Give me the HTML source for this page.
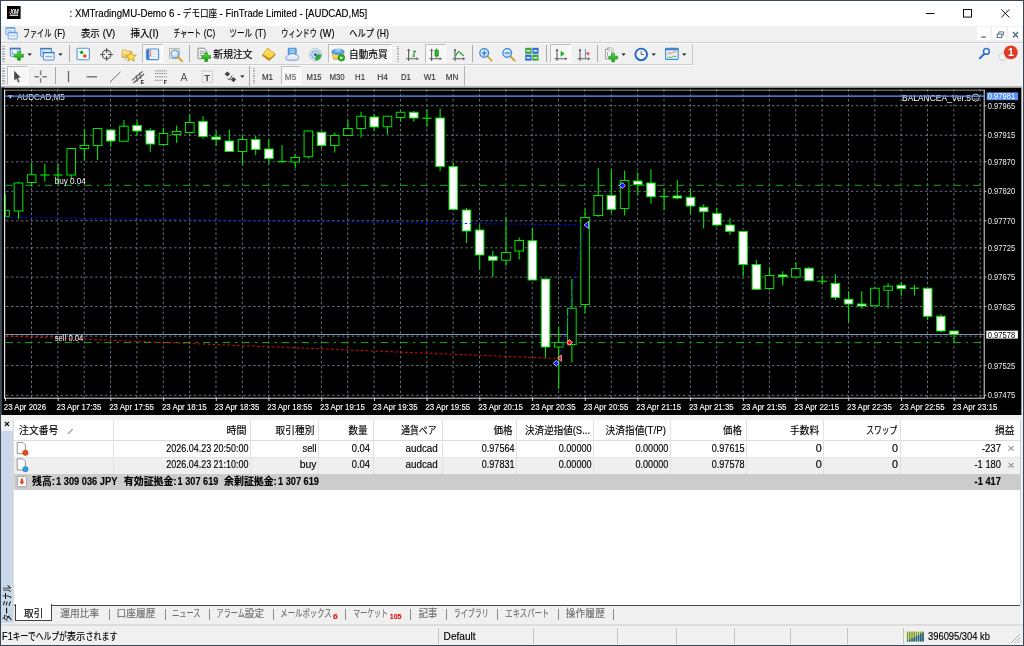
<!DOCTYPE html>
<html lang="ja"><head><meta charset="utf-8"><title>MT4</title>
<style>
*{box-sizing:border-box;margin:0;padding:0}
html,body{width:1024px;height:646px;overflow:hidden;background:#f0f0f0}
body{position:relative;font-family:"Liberation Sans","Noto Sans CJK JP",sans-serif;font-size:12px;color:#000}
.abs{position:absolute}
svg{will-change:transform}
#win{position:absolute;left:0;top:0;width:1024px;height:646px;border:1px solid #3a4755;border-right-width:1.5px;border-bottom-width:1.5px;pointer-events:none;z-index:50}
#title{left:1px;top:1px;width:1022px;height:24.5px;background:#fff}
#title .t{position:absolute;left:68.5px;top:4.5px;font-size:12.3px;line-height:16px;white-space:nowrap;color:#000;letter-spacing:-0.12px}
#menu{left:1px;top:25.5px;width:1022px;height:17px;background:#f0f0f0}
.mi{position:absolute;top:0;height:17px;line-height:17px;font-size:12px;white-space:nowrap;color:#000}
.mi i{font-style:normal;font-family:"Liberation Sans",sans-serif}
.hl{position:absolute;left:1px;width:1022px;height:1px}
.sep{position:absolute;width:1px;background:#a8a8a8}
.grip{position:absolute;width:2.6px;background-image:repeating-linear-gradient(to bottom,#b4b4b4 0,#b4b4b4 1.1px,transparent 1.1px,transparent 2.5px)}
.btnon{position:absolute;background:#f7f7f7;border:1px solid #fdfdfd;border-top-color:#bdbdbd;border-left-color:#bdbdbd}
.tf{position:absolute;top:70px;font-size:9.6px;line-height:12px;color:#444;white-space:nowrap;letter-spacing:-0.2px}
.jp{font-family:"Noto Sans CJK JP","Liberation Sans",sans-serif}
.tbtxt{position:absolute;top:46.5px;font-size:12.2px;line-height:14px;white-space:nowrap;color:#000;font-weight:500;letter-spacing:0.6px}
/* terminal */
#term{left:13.5px;top:420px;width:1006.5px;height:185px;background:#fff}
.th{position:absolute;top:0;height:20px;line-height:20px;font-size:11.6px;color:#000;white-space:nowrap}
.row{position:absolute;left:0;width:1007.5px;height:16.5px}
.c{position:absolute;top:0;height:16.5px;line-height:16.5px;font-size:11px;white-space:nowrap;text-align:right;color:#000;letter-spacing:-0.1px}
.vl{position:absolute;top:0;width:1px;background:#e2e2e2}
.tab{position:absolute;top:607px;height:14px;line-height:14px;font-size:11.4px;color:#666;white-space:nowrap}
.tsep{position:absolute;top:608.5px;width:1px;height:11.5px;background:#8c8c8c}
.ssep{position:absolute;top:628.2px;width:1px;height:15.6px;background:#c4c4c4}
</style></head><body>
<!-- title bar -->
<div id="title" class="abs">
 <svg class="abs" style="left:6.3px;top:4.7px" width="13.6" height="13.4" viewBox="0 0 13.6 13.4"><rect width="13.6" height="13.4" fill="#000"/><path d="M1.6 6.4L2.5 3.8L3.3 6.4L2.5 7.6Z" fill="#d01818"/><text x="2.9" y="7.9" font-family="Liberation Sans,sans-serif" font-size="6.6" font-weight="bold" font-style="italic" fill="#fff" textLength="8.8" lengthAdjust="spacingAndGlyphs">XM</text><rect x="2.6" y="8.6" width="8.6" height="1.3" fill="#e4e4e4"/></svg>
 <svg class="abs" style="left:920px;top:4px" width="95" height="18" viewBox="920 4 95 18"><path d="M924.8 12.5H933.6" stroke="#111" stroke-width="1"/><rect x="962.5" y="8.5" width="8" height="7.6" fill="none" stroke="#111" stroke-width="1"/><path d="M1000.3 8.4L1008.3 16.4M1008.3 8.4L1000.3 16.4" stroke="#111" stroke-width="1"/></svg>
</div>
<!-- menu bar -->
<div id="menu" class="abs">
 <svg class="abs" style="left:3.5px;top:1.5px" width="14" height="14" viewBox="0 0 14 14"><rect x="0.9" y="0.5" width="9" height="6.8" rx="0.5" fill="#eef5fd" stroke="#5e9ae6" stroke-width="0.9"/><path d="M0.9 1.1H9.9" stroke="#5e9ae6" stroke-width="1.2"/><path d="M2.2 4.4L3.4 3.2L4.6 4.4L5.8 3.2L7 4.4" fill="none" stroke="#5e9ae6" stroke-width="0.7"/><rect x="3.2" y="5.2" width="9" height="6.7" rx="0.5" fill="#f6faff" stroke="#5e9ae6" stroke-width="0.9"/><path d="M3.2 5.8H12.2" stroke="#5e9ae6" stroke-width="1.2"/><path d="M4.6 9.6L5.8 8.2L7 9.6L8.2 8.2L9.4 9.6L10.6 8.2" fill="none" stroke="#5e9ae6" stroke-width="0.7"/></svg>
 <div class="abs" style="left:975.8px;top:1.3px;width:13.4px;height:13.6px;background:#fff"></div>
 <div class="abs" style="left:991.4px;top:1.3px;width:13.6px;height:13.6px;background:#fff"></div>
 <div class="abs" style="left:1007.2px;top:1.3px;width:13.4px;height:13.6px;background:#fff"></div>
 <svg class="abs" style="left:975px;top:0" width="47" height="17" viewBox="975 25.5 47 17"><path d="M980.2 36.6H985" stroke="#5a6e8c" stroke-width="1.3"/><path d="M997.8 33.4V31.4H1002.6V34.6H1001" fill="none" stroke="#5a6e8c" stroke-width="1"/><rect x="996.2" y="33.6" width="4.6" height="3.4" fill="none" stroke="#5a6e8c" stroke-width="1"/><path d="M1012 31.6L1017 37M1017 31.6L1012 37" stroke="#5a6e8c" stroke-width="1.5"/></svg>
</div>
<div class="hl" style="top:42.3px;background:#cfcfcf"></div>
<div class="hl" style="top:43.2px;background:#fafafa"></div>
<!-- toolbar backgrounds / active buttons -->
<div class="btnon" style="left:141.8px;top:43.6px;width:21.6px;height:19.6px"></div>
<div class="btnon" style="left:328.2px;top:43.8px;width:64.2px;height:19.6px"></div>
<div class="btnon" style="left:425px;top:43.8px;width:20.6px;height:19.6px"></div>
<div class="btnon" style="left:550px;top:43.8px;width:20.6px;height:19.6px"></div>
<div class="btnon" style="left:7.2px;top:66.2px;width:20.8px;height:19px"></div>
<div class="btnon" style="left:280.6px;top:66.2px;width:20.8px;height:19px"></div>
<div class="grip" style="left:2.2px;top:46.4px;height:15.4px"></div>
<div class="grip" style="left:396.6px;top:46.4px;height:15.4px"></div>
<div class="grip" style="left:2.2px;top:68.2px;height:16px"></div>
<div class="grip" style="left:252.6px;top:68.2px;height:16px"></div>
<div class="sep" style="left:69.3px;top:45.4px;height:17px"></div>
<div class="sep" style="left:188.9px;top:45.4px;height:17px"></div>
<div class="sep" style="left:471.8px;top:45.4px;height:17px"></div>
<div class="sep" style="left:546px;top:45.4px;height:17px"></div>
<div class="sep" style="left:596.8px;top:45.4px;height:17px"></div>
<div class="sep" style="left:54.5px;top:67.4px;height:17px"></div>
<div class="sep" style="left:249.2px;top:66px;height:20px"></div>
<div class="sep" style="left:464.4px;top:65.6px;height:20.6px;background:#b4b4b4"></div>
<!-- toolbar 1 end borders -->
<div class="abs" style="left:692px;top:44px;width:1px;height:20.6px;background:#c8c8c8"></div>
<div class="abs" style="left:1px;top:64px;width:692px;height:1px;background:#cdcdcd"></div>
<div class="abs" style="left:1px;top:65px;width:692px;height:1px;background:#fbfbfb"></div>
<svg class="abs" style="left:0;top:43px" width="1024" height="44" viewBox="0 43 1024 44">
<defs>
 <linearGradient id="gpl" x1="0" y1="0" x2="0" y2="1"><stop offset="0" stop-color="#5ee04a"/><stop offset="1" stop-color="#109a10"/></linearGradient>
 <linearGradient id="gbl" x1="0" y1="0" x2="0" y2="1"><stop offset="0" stop-color="#fbfdff"/><stop offset="1" stop-color="#d4e2f2"/></linearGradient>
 <linearGradient id="gyl" x1="0" y1="0" x2="0" y2="1"><stop offset="0" stop-color="#fff0a4"/><stop offset="1" stop-color="#f0c444"/></linearGradient>
 <radialGradient id="gmag" cx="0.4" cy="0.35" r="0.7"><stop offset="0" stop-color="#f2f9ff"/><stop offset="1" stop-color="#a8d0f4"/></radialGradient>
</defs>
<g id="dd" fill="#111">
 <path d="M27.6 53.4H31.8L29.7 55.8Z"/><path d="M58.4 53.4H62.6L60.5 55.8Z"/>
 <path d="M621.5 53.4H625.7L623.6 55.8Z"/><path d="M651.6 53.4H655.8L653.7 55.8Z"/><path d="M682.1 53.4H686.3L684.2 55.8Z"/>
 <path d="M240.2 75.4H244.4L242.3 77.8Z"/>
</g>
<!-- 1 new chart -->
<rect x="10.3" y="48.3" width="9.8" height="7.9" rx="0.3" fill="#f4f8fd" stroke="#4d8ad0" stroke-width="1"/>
<rect x="9.8" y="47.8" width="10.8" height="1.7" fill="#3f7cc6"/>
<path d="M12.4 50.6V54.8M11.6 53.8H14.4" fill="none" stroke="#5a8cc8" stroke-width="0.7"/>
<path d="M17.4 51.2H20.4V54.2H23.4V57.2H20.4V60.2H17.4V57.2H14.4V54.2H17.4Z" fill="url(#gpl)" stroke="#0c8a0c" stroke-width="0.6"/>
<!-- 2 profiles -->
<rect x="40.7" y="48.4" width="10.6" height="7.8" rx="0.3" fill="#eaf2fb" stroke="#4d8ad0" stroke-width="1"/>
<rect x="40.2" y="47.9" width="11.6" height="1.6" fill="#3f7cc6"/>
<path d="M42.8 50.4V54.6M42 53.4H49.6" stroke="#6a9ad6" stroke-width="0.7" fill="none"/>
<rect x="43.5" y="52.4" width="10.6" height="7.6" rx="0.3" fill="#f4f8fd" stroke="#4d8ad0" stroke-width="1"/>
<rect x="43" y="51.9" width="11.6" height="1.5" fill="#3f7cc6"/>
<path d="M45.4 56.6H52.4" stroke="#8fb2e0" stroke-width="1.6"/>
<!-- 3 market watch -->
<rect x="77" y="48.2" width="12.4" height="11.6" rx="1.2" fill="#f6fafe" stroke="#4f9ade" stroke-width="1.1"/>
<path d="M79.4 52.4L81.6 50.2L83.8 52.4L81.6 54.6Z" fill="#22a022"/><path d="M82.6 56L84.8 53.8L87 56L84.8 58.2Z" fill="#e4551c"/>
<!-- 4 crosshair -->
<circle cx="106.6" cy="54.5" r="4.3" fill="none" stroke="#5a5a5a" stroke-width="1.2"/>
<path d="M106.6 48.2V53M106.6 56V60.8M100 54.5H105.2M108 54.5H113.2" stroke="#5a5a5a" stroke-width="1.2"/>
<!-- 5 navigator folder+star -->
<path d="M122.2 50H126.2L127.2 51.2H131.4V57.6H122.2Z" fill="url(#gyl)" stroke="#c89a2c" stroke-width="0.7"/>
<path d="M131 51.6L132.5 55L136.2 55.3L133.4 57.7L134.3 61.2L131 59.3L127.7 61.2L128.6 57.7L125.8 55.3L129.5 55Z" fill="#ffe050" stroke="#c4961c" stroke-width="0.8"/>
<path d="M125.4 57V60.6" stroke="#777" stroke-width="0.7" stroke-dasharray="1 1"/>
<!-- 6 terminal -->
<rect x="146.4" y="49" width="12.2" height="10.6" rx="1.2" fill="#f8fbff" stroke="#4a8ad2" stroke-width="1.1"/>
<rect x="147" y="49.6" width="2.4" height="9.4" fill="#3c7ccc"/>
<path d="M151.2 52H157.6M151.2 54.4H157.6M151.2 56.8H157.6" stroke="#b8cfe8" stroke-width="0.7"/>
<circle cx="150.6" cy="51" r="0.7" fill="#e03020"/><circle cx="150.6" cy="53.4" r="0.7" fill="#e03020"/><circle cx="150.6" cy="55.8" r="0.7" fill="#e03020"/>
<!-- 7 strategy tester -->
<rect x="169.6" y="48.4" width="9.6" height="10" fill="#f4f0e4" stroke="#b0a68a" stroke-width="0.8"/>
<circle cx="175" cy="54" r="3.9" fill="url(#gmag)" stroke="#5a9ad8" stroke-width="1.1"/>
<path d="M177.8 57L182.4 61.4" stroke="#d8a428" stroke-width="1.8" stroke-linecap="round"/>
<!-- 8 new order -->
<path d="M198 48.2H204.2L206.4 50.4V58.6H198Z" fill="#fbfbfb" stroke="#787878" stroke-width="0.9"/>
<path d="M199.6 51.2H204.8M199.6 53.2H204.8M199.6 55.2H202" stroke="#8a8a8a" stroke-width="0.9"/>
<path d="M204.8 52.8H207.6V55.6H210.6V58.4H207.6V61.4H204.8V58.4H201.8V55.6H204.8Z" fill="url(#gpl)" stroke="#0c8a0c" stroke-width="0.6"/>
<!-- 9 gold book -->
<path d="M262.4 55.6L267.7 48.4L275.5 54.6L269.2 60.6Z" fill="#b8841a" stroke="#a87410" stroke-width="0.6"/>
<path d="M263 54.4L267.8 48.5L275 54.2L269.6 58.6Z" fill="#ffd640" stroke="#e0a820" stroke-width="0.5"/>
<path d="M265.4 53.6L268 50.4L272.2 53.8" fill="none" stroke="#ffef9a" stroke-width="0.9"/>
<!-- 10 cloud -->
<rect x="288.2" y="48.2" width="8" height="6.8" rx="0.8" fill="#4fa0ec" stroke="#2e7fd0" stroke-width="0.7"/>
<text x="289.6" y="53.4" font-family="Liberation Sans,sans-serif" font-size="4.6" font-weight="bold" fill="#e8f4ff">10</text>
<path d="M288 60.2Q285.8 60.2 285.8 58Q285.8 56 288 55.8Q288.6 53.6 291.2 54Q293 52.6 295 54.4Q298.8 54.2 298.6 57.6Q298.6 60.2 296 60.2Z" fill="url(#gbl)" stroke="#6c8cc4" stroke-width="0.8"/>
<!-- 11 signals -->
<circle cx="315.4" cy="54.6" r="6.2" fill="#d9e6f3" stroke="#a9bfd8" stroke-width="0.8"/>
<circle cx="315.4" cy="54.6" r="3.8" fill="none" stroke="#6fa0d8" stroke-width="1"/>
<path d="M315.4 54.6L321.6 54.6A6.2 6.2 0 0 1 315.4 60.8Z" fill="#36a836"/>
<circle cx="315.4" cy="54.6" r="1.5" fill="#2a6cc0"/>
<!-- autotrading icon -->
<path d="M332 53.2Q332 49.6 337.6 49.4Q343.6 49.4 344 53.2L343 59.4H333.6Z" fill="url(#gyl)" stroke="#c49a30" stroke-width="0.6"/>
<ellipse cx="338" cy="51.8" rx="6.2" ry="2.6" fill="#5aa6e6" stroke="#2e78c8" stroke-width="0.7"/>
<ellipse cx="338" cy="50.4" rx="3" ry="1.4" fill="#9fd0f6"/>
<circle cx="341.4" cy="57.8" r="3.3" fill="#22b022" stroke="#0a800a" stroke-width="0.6"/>
<path d="M340.4 56.2L343.2 57.8L340.4 59.4Z" fill="#fff"/>
<!-- 12 bar chart -->
<path d="M408.6 49.4V61M406.2 58.8H417.6" stroke="#5c5c5c" stroke-width="1.1" fill="none"/><path d="M407.1 51L408.6 48.4L410.1 51Z M416.6 57.3L419.0 58.8L416.6 60.3Z" fill="#5c5c5c"/>
<path d="M414 50.6V57M414 51.4H416M412.2 56H414" stroke="#1c9a1c" stroke-width="1.1" fill="none"/>
<!-- 13 candles (active) -->
<path d="M431.6 49.4V61M429.2 58.8H440.6" stroke="#5c5c5c" stroke-width="1.1" fill="none"/><path d="M430.1 51L431.6 48.4L433.1 51Z M439.6 57.3L442.0 58.8L439.6 60.3Z" fill="#5c5c5c"/>
<path d="M436.6 48.4V57.8" stroke="#1c8a1c" stroke-width="0.9"/><rect x="435" y="50.2" width="3.2" height="5.8" fill="#28c028" stroke="#0e7a0e" stroke-width="0.7"/>
<!-- 14 line chart -->
<path d="M455 49.4V61M452.6 58.8H464.0" stroke="#5c5c5c" stroke-width="1.1" fill="none"/><path d="M453.5 51L455 48.4L456.5 51Z M463.0 57.3L465.4 58.8L463.0 60.3Z" fill="#5c5c5c"/>
<path d="M455.4 56.4Q458.4 49.6 460.2 52.6T464 55.4" stroke="#1c9a1c" stroke-width="1.1" fill="none"/>
<!-- zoom in / out -->
<path d="M487.6 56.4L491.6 60.6" stroke="#d8a428" stroke-width="2" stroke-linecap="round"/>
<circle cx="484.2" cy="53" r="4.4" fill="url(#gmag)" stroke="#3a86d8" stroke-width="1.2"/>
<path d="M481.8 53H486.6M484.2 50.6V55.4" stroke="#2a6cc0" stroke-width="1.2"/>
<path d="M510.6 56.4L514.6 60.6" stroke="#d8a428" stroke-width="2" stroke-linecap="round"/>
<circle cx="507.2" cy="53" r="4.4" fill="url(#gmag)" stroke="#3a86d8" stroke-width="1.2"/>
<path d="M504.8 53H509.6" stroke="#2a6cc0" stroke-width="1.2"/>
<!-- tile -->
<rect x="525.2" y="47.8" width="6.4" height="6" fill="#3aa63a"/><rect x="532.4" y="47.8" width="6.2" height="6" fill="#2e6fd0"/>
<rect x="525.2" y="54.6" width="6.4" height="6" fill="#2e6fd0"/><rect x="532.4" y="54.6" width="6.2" height="6" fill="#3aa63a"/>
<path d="M526.4 50.8H530.4M533.6 50.8H537.4M526.4 57.8H530.4M533.6 57.8H537.4" stroke="#e8f0f8" stroke-width="1.4"/>
<!-- autoscroll (active) -->
<path d="M557 49.4V61M554.6 58.8H566.0" stroke="#5c5c5c" stroke-width="1.1" fill="none"/><path d="M555.5 51L557 48.4L558.5 51Z M565.0 57.3L567.4 58.8L565.0 60.3Z" fill="#5c5c5c"/>
<path d="M560.6 50.8L564.6 53.8L560.6 56.8Z" fill="#22a822"/>
<!-- chart shift -->
<path d="M580 49.4V61M577.6 58.8H589.0" stroke="#5c5c5c" stroke-width="1.1" fill="none"/><path d="M578.5 51L580 48.4L581.5 51Z M588.0 57.3L590.4 58.8L588.0 60.3Z" fill="#5c5c5c"/>
<path d="M585.4 49V58" stroke="#4a8ad2" stroke-width="0.9"/><path d="M589.6 53.6H587M588.8 51.8L586.4 53.6L588.8 55.4" stroke="#d84a1c" stroke-width="1" fill="none"/>
<!-- indicators -->
<path d="M607.4 47.8H611.4L613.2 49.6V57H607.4Z" fill="#f4f4f4" stroke="#999" stroke-width="0.7"/>
<path d="M605.4 49.4H609.6L611.4 51.2V58.8H605.4Z" fill="#fbfbfb" stroke="#888" stroke-width="0.8"/>
<text x="606.8" y="55.6" font-family="Liberation Serif,serif" font-style="italic" font-size="5.6" fill="#555">f</text>
<path d="M611.8 53.4H614.6V56.2H617.6V59H614.6V61.8H611.8V59H608.8V56.2H611.8Z" fill="url(#gpl)" stroke="#0c8a0c" stroke-width="0.6"/>
<!-- clock -->
<circle cx="641.2" cy="54.4" r="5.8" fill="#f4f8fc" stroke="#1e66c8" stroke-width="1.9"/>
<path d="M641.2 51V54.6H644" stroke="#555" stroke-width="0.9" fill="none"/>
<!-- template -->
<rect x="665.6" y="48.4" width="12.6" height="11" rx="0.8" fill="#fafcff" stroke="#3f86d6" stroke-width="1.1"/>
<rect x="665.6" y="48.4" width="12.6" height="2" fill="#3f86d6"/>
<path d="M667.4 53.6L669.6 52.4L671.6 53.2L674 51.8L676.6 52.2" stroke="#d05a2a" stroke-width="0.9" fill="none"/>
<path d="M667.4 57.8L669.6 56.8L671.6 57.6L674 56L676.6 57" stroke="#2e9e2e" stroke-width="0.9" fill="none"/>
<path d="M666 54.8H678" stroke="#9cc0e8" stroke-width="0.6"/>
<!-- search + chat -->
<circle cx="986.4" cy="51.4" r="2.9" fill="#f4f8ff" stroke="#2e6fd0" stroke-width="1.5"/>
<path d="M984.2 54L979.8 58.2" stroke="#2e6fd0" stroke-width="2" stroke-linecap="round"/>
<ellipse cx="1003.4" cy="56.6" rx="4.4" ry="3.4" fill="#f6f6f6" stroke="#c0c0c0" stroke-width="0.7"/><path d="M1001.6 59.4L1000.6 62L1004 59.8Z" fill="#d8d8d8"/>
<circle cx="1010.8" cy="52.4" r="6.9" fill="#e23a22"/>
<text x="1010.9" y="56.2" text-anchor="middle" font-family="Liberation Sans,sans-serif" font-weight="bold" font-size="10.6" fill="#fff">1</text>
<!-- toolbar 2 icons -->
<path d="M14.2 70.8V80.6L16.4 78.6L18.2 82.4L19.6 81.8L17.8 78L20.6 77.6Z" fill="#484848"/>
<path d="M40.6 70.6V75.2M40.6 78.2V82.8M34.4 76.7H39M42.2 76.7H46.8" stroke="#7c7c7c" stroke-width="1.4"/>
<path d="M68.5 71V82.2" stroke="#666" stroke-width="1.3"/>
<path d="M86.6 76.8H97" stroke="#666" stroke-width="1.3"/>
<path d="M110 82.2L120.4 72" stroke="#6a6a6a" stroke-width="1"/>
<path d="M132 80.4L142.6 71.4M133.4 83L144 74M136 75.4L137.6 81.6M139.4 72.6L141 78.8" stroke="#555" stroke-width="1.05"/>
<text x="140.4" y="83.8" font-family="Liberation Sans,sans-serif" font-weight="bold" font-size="5.4" fill="#222">E</text>
<path d="M155 70.9H166.8M155 73.5H166.8M155 76.8H166.8M155 80.3H162.6" stroke="#6a6a6a" stroke-width="0.9" stroke-dasharray="1.3 0.9"/>
<text x="163.8" y="83.8" font-family="Liberation Sans,sans-serif" font-weight="bold" font-size="5.4" fill="#222">F</text>
<text x="180.6" y="80.6" font-family="Liberation Sans,sans-serif" font-size="10.4" fill="#555">A</text>
<rect x="202.2" y="71" width="10.2" height="11.2" fill="none" stroke="#9a9a9a" stroke-width="0.8" stroke-dasharray="1 1"/>
<text x="204.2" y="80.6" font-family="Liberation Sans,sans-serif" font-size="9.6" font-weight="bold" fill="#4a4a4a">T</text>
<path d="M224.6 74L227.4 71.4L230.2 74L227.4 76.6Z" fill="#444"/><path d="M230.6 79.6L233.4 77L236.2 79.6L233.4 82.2Z" fill="#444"/>
<path d="M227.6 78.4L229.2 80L232.2 75.4" stroke="#444" stroke-width="0.9" fill="none"/>
</svg>

<svg class="chart" width="1024" height="330" viewBox="0 86 1024 330" style="position:absolute;left:0;top:86px">
<rect x="1" y="87.6" width="1020.6" height="327.8" fill="#000"/>
<rect x="1" y="86.4" width="1021" height="1.3" fill="#9c9c9c"/>
<rect x="0.8" y="87.6" width="1.4" height="327.8" fill="#3a4450"/>
<rect x="1021.6" y="87.6" width="1.2" height="327.8" fill="#e8e8e8"/>
<line x1="31.50" y1="89.22" x2="31.50" y2="397.8" stroke="#7d8ea0" stroke-width="0.8" stroke-dasharray="2.47 2.47"/>
<line x1="57.85" y1="89.22" x2="57.85" y2="397.8" stroke="#7d8ea0" stroke-width="0.8" stroke-dasharray="2.47 2.47"/>
<line x1="84.21" y1="89.22" x2="84.21" y2="397.8" stroke="#7d8ea0" stroke-width="0.8" stroke-dasharray="2.47 2.47"/>
<line x1="110.56" y1="89.22" x2="110.56" y2="397.8" stroke="#7d8ea0" stroke-width="0.8" stroke-dasharray="2.47 2.47"/>
<line x1="136.91" y1="89.22" x2="136.91" y2="397.8" stroke="#7d8ea0" stroke-width="0.8" stroke-dasharray="2.47 2.47"/>
<line x1="163.27" y1="89.22" x2="163.27" y2="397.8" stroke="#7d8ea0" stroke-width="0.8" stroke-dasharray="2.47 2.47"/>
<line x1="189.62" y1="89.22" x2="189.62" y2="397.8" stroke="#7d8ea0" stroke-width="0.8" stroke-dasharray="2.47 2.47"/>
<line x1="215.97" y1="89.22" x2="215.97" y2="397.8" stroke="#7d8ea0" stroke-width="0.8" stroke-dasharray="2.47 2.47"/>
<line x1="242.32" y1="89.22" x2="242.32" y2="397.8" stroke="#7d8ea0" stroke-width="0.8" stroke-dasharray="2.47 2.47"/>
<line x1="268.68" y1="89.22" x2="268.68" y2="397.8" stroke="#7d8ea0" stroke-width="0.8" stroke-dasharray="2.47 2.47"/>
<line x1="295.03" y1="89.22" x2="295.03" y2="397.8" stroke="#7d8ea0" stroke-width="0.8" stroke-dasharray="2.47 2.47"/>
<line x1="321.38" y1="89.22" x2="321.38" y2="397.8" stroke="#7d8ea0" stroke-width="0.8" stroke-dasharray="2.47 2.47"/>
<line x1="347.74" y1="89.22" x2="347.74" y2="397.8" stroke="#7d8ea0" stroke-width="0.8" stroke-dasharray="2.47 2.47"/>
<line x1="374.09" y1="89.22" x2="374.09" y2="397.8" stroke="#7d8ea0" stroke-width="0.8" stroke-dasharray="2.47 2.47"/>
<line x1="400.44" y1="89.22" x2="400.44" y2="397.8" stroke="#7d8ea0" stroke-width="0.8" stroke-dasharray="2.47 2.47"/>
<line x1="426.80" y1="89.22" x2="426.80" y2="397.8" stroke="#7d8ea0" stroke-width="0.8" stroke-dasharray="2.47 2.47"/>
<line x1="453.15" y1="89.22" x2="453.15" y2="397.8" stroke="#7d8ea0" stroke-width="0.8" stroke-dasharray="2.47 2.47"/>
<line x1="479.50" y1="89.22" x2="479.50" y2="397.8" stroke="#7d8ea0" stroke-width="0.8" stroke-dasharray="2.47 2.47"/>
<line x1="505.85" y1="89.22" x2="505.85" y2="397.8" stroke="#7d8ea0" stroke-width="0.8" stroke-dasharray="2.47 2.47"/>
<line x1="532.21" y1="89.22" x2="532.21" y2="397.8" stroke="#7d8ea0" stroke-width="0.8" stroke-dasharray="2.47 2.47"/>
<line x1="558.56" y1="89.22" x2="558.56" y2="397.8" stroke="#7d8ea0" stroke-width="0.8" stroke-dasharray="2.47 2.47"/>
<line x1="584.91" y1="89.22" x2="584.91" y2="397.8" stroke="#7d8ea0" stroke-width="0.8" stroke-dasharray="2.47 2.47"/>
<line x1="611.27" y1="89.22" x2="611.27" y2="397.8" stroke="#7d8ea0" stroke-width="0.8" stroke-dasharray="2.47 2.47"/>
<line x1="637.62" y1="89.22" x2="637.62" y2="397.8" stroke="#7d8ea0" stroke-width="0.8" stroke-dasharray="2.47 2.47"/>
<line x1="663.97" y1="89.22" x2="663.97" y2="397.8" stroke="#7d8ea0" stroke-width="0.8" stroke-dasharray="2.47 2.47"/>
<line x1="690.33" y1="89.22" x2="690.33" y2="397.8" stroke="#7d8ea0" stroke-width="0.8" stroke-dasharray="2.47 2.47"/>
<line x1="716.68" y1="89.22" x2="716.68" y2="397.8" stroke="#7d8ea0" stroke-width="0.8" stroke-dasharray="2.47 2.47"/>
<line x1="743.03" y1="89.22" x2="743.03" y2="397.8" stroke="#7d8ea0" stroke-width="0.8" stroke-dasharray="2.47 2.47"/>
<line x1="769.38" y1="89.22" x2="769.38" y2="397.8" stroke="#7d8ea0" stroke-width="0.8" stroke-dasharray="2.47 2.47"/>
<line x1="795.74" y1="89.22" x2="795.74" y2="397.8" stroke="#7d8ea0" stroke-width="0.8" stroke-dasharray="2.47 2.47"/>
<line x1="822.09" y1="89.22" x2="822.09" y2="397.8" stroke="#7d8ea0" stroke-width="0.8" stroke-dasharray="2.47 2.47"/>
<line x1="848.44" y1="89.22" x2="848.44" y2="397.8" stroke="#7d8ea0" stroke-width="0.8" stroke-dasharray="2.47 2.47"/>
<line x1="874.80" y1="89.22" x2="874.80" y2="397.8" stroke="#7d8ea0" stroke-width="0.8" stroke-dasharray="2.47 2.47"/>
<line x1="901.15" y1="89.22" x2="901.15" y2="397.8" stroke="#7d8ea0" stroke-width="0.8" stroke-dasharray="2.47 2.47"/>
<line x1="927.50" y1="89.22" x2="927.50" y2="397.8" stroke="#7d8ea0" stroke-width="0.8" stroke-dasharray="2.47 2.47"/>
<line x1="953.86" y1="89.22" x2="953.86" y2="397.8" stroke="#7d8ea0" stroke-width="0.8" stroke-dasharray="2.47 2.47"/>
<line x1="980.21" y1="89.22" x2="980.21" y2="397.8" stroke="#7d8ea0" stroke-width="0.8" stroke-dasharray="2.47 2.47"/>
<line x1="6.1" y1="105.7" x2="984" y2="105.7" stroke="#7d8ea0" stroke-width="0.8" stroke-dasharray="2.47 2.47"/>
<line x1="6.1" y1="135.2" x2="984" y2="135.2" stroke="#7d8ea0" stroke-width="0.8" stroke-dasharray="2.47 2.47"/>
<line x1="6.1" y1="161.8" x2="984" y2="161.8" stroke="#7d8ea0" stroke-width="0.8" stroke-dasharray="2.47 2.47"/>
<line x1="6.1" y1="191.3" x2="984" y2="191.3" stroke="#7d8ea0" stroke-width="0.8" stroke-dasharray="2.47 2.47"/>
<line x1="6.1" y1="220.8" x2="984" y2="220.8" stroke="#7d8ea0" stroke-width="0.8" stroke-dasharray="2.47 2.47"/>
<line x1="6.1" y1="247.8" x2="984" y2="247.8" stroke="#7d8ea0" stroke-width="0.8" stroke-dasharray="2.47 2.47"/>
<line x1="6.1" y1="277.1" x2="984" y2="277.1" stroke="#7d8ea0" stroke-width="0.8" stroke-dasharray="2.47 2.47"/>
<line x1="6.1" y1="306.5" x2="984" y2="306.5" stroke="#7d8ea0" stroke-width="0.8" stroke-dasharray="2.47 2.47"/>
<line x1="6.1" y1="336.15" x2="984" y2="336.15" stroke="#7d8ea0" stroke-width="0.8" stroke-dasharray="2.47 2.47"/>
<line x1="6.1" y1="365.6" x2="984" y2="365.6" stroke="#7d8ea0" stroke-width="0.8" stroke-dasharray="2.47 2.47"/>
<line x1="6.1" y1="395.3" x2="984" y2="395.3" stroke="#7d8ea0" stroke-width="0.8" stroke-dasharray="2.47 2.47"/>
<rect x="2.2" y="87.6" width="2.4" height="327.8" fill="#000"/>
<rect x="4.1" y="89.7" width="980.6" height="0.9" fill="#a4a4a4"/>
<rect x="4.1" y="89.7" width="1.1" height="309" fill="#f4f4f4"/>
<rect x="983.7" y="89.7" width="1" height="309" fill="#dcdcdc"/>
<rect x="4.1" y="397.7" width="980.6" height="1" fill="#dcdcdc"/>
<line x1="5.4" y1="334.5" x2="984" y2="334.5" stroke="#8696aa" stroke-width="1"/>
<line x1="5.4" y1="185.3" x2="981" y2="185.3" stroke="#18ac18" stroke-width="1" stroke-dasharray="7.4 4.94 2.47 4.94"/>
<line x1="5.4" y1="342.6" x2="981" y2="342.6" stroke="#18ac18" stroke-width="1" stroke-dasharray="7.4 4.94 2.47 4.94"/>
<path d="M5.5 194.2V216.7M5.5 210.5H9.4V216.7H5.5" stroke="#00e400" stroke-width="0.95" fill="none"/>
<line x1="18.50" y1="181.75" x2="18.50" y2="219.25" stroke="#00e400" stroke-width="1.1"/>
<rect x="14.20" y="183" width="8.60" height="28.00" fill="#000" stroke="#00e400" stroke-width="1"/>
<line x1="31.68" y1="162.5" x2="31.68" y2="186.75" stroke="#00e400" stroke-width="1.1"/>
<rect x="27.38" y="174.75" width="8.60" height="7.75" fill="#000" stroke="#00e400" stroke-width="1"/>
<line x1="44.85" y1="163.75" x2="44.85" y2="181.75" stroke="#00e400" stroke-width="1.1"/>
<line x1="40.25" y1="175" x2="49.45" y2="175" stroke="#00e400" stroke-width="1.2"/>
<line x1="58.03" y1="163.75" x2="58.03" y2="184.25" stroke="#00e400" stroke-width="1.1"/>
<line x1="53.43" y1="175" x2="62.63" y2="175" stroke="#00e400" stroke-width="1.2"/>
<line x1="71.20" y1="148" x2="71.20" y2="179.25" stroke="#00e400" stroke-width="1.1"/>
<rect x="66.90" y="148.5" width="8.60" height="26.50" fill="#000" stroke="#00e400" stroke-width="1"/>
<line x1="84.38" y1="129.25" x2="84.38" y2="160.5" stroke="#00e400" stroke-width="1.1"/>
<rect x="80.08" y="145.5" width="8.60" height="3.00" fill="#000" stroke="#00e400" stroke-width="1"/>
<line x1="97.56" y1="128" x2="97.56" y2="160" stroke="#00e400" stroke-width="1.1"/>
<rect x="93.26" y="128.5" width="8.60" height="17.00" fill="#000" stroke="#00e400" stroke-width="1"/>
<line x1="110.73" y1="129.25" x2="110.73" y2="146.75" stroke="#00e400" stroke-width="1.1"/>
<rect x="106.43" y="130" width="8.60" height="11.00" fill="#fff" stroke="#00e400" stroke-width="1"/>
<line x1="123.91" y1="120" x2="123.91" y2="141.75" stroke="#00e400" stroke-width="1.1"/>
<rect x="119.61" y="126.25" width="8.60" height="15.00" fill="#000" stroke="#00e400" stroke-width="1"/>
<line x1="137.08" y1="120.5" x2="137.08" y2="135.5" stroke="#00e400" stroke-width="1.1"/>
<rect x="132.78" y="125.5" width="8.60" height="5.50" fill="#fff" stroke="#00e400" stroke-width="1"/>
<line x1="150.26" y1="128" x2="150.26" y2="152.25" stroke="#00e400" stroke-width="1.1"/>
<rect x="145.96" y="130.5" width="8.60" height="13.50" fill="#fff" stroke="#00e400" stroke-width="1"/>
<line x1="163.44" y1="128" x2="163.44" y2="146" stroke="#00e400" stroke-width="1.1"/>
<rect x="159.14" y="133.5" width="8.60" height="11.00" fill="#000" stroke="#00e400" stroke-width="1"/>
<line x1="176.61" y1="125.5" x2="176.61" y2="143" stroke="#00e400" stroke-width="1.1"/>
<rect x="172.31" y="131.5" width="8.60" height="3.00" fill="#000" stroke="#00e400" stroke-width="1"/>
<line x1="189.79" y1="114.25" x2="189.79" y2="133.5" stroke="#00e400" stroke-width="1.1"/>
<rect x="185.49" y="122.5" width="8.60" height="10.00" fill="#000" stroke="#00e400" stroke-width="1"/>
<line x1="202.96" y1="116.25" x2="202.96" y2="138.75" stroke="#00e400" stroke-width="1.1"/>
<rect x="198.66" y="121.5" width="8.60" height="15.00" fill="#fff" stroke="#00e400" stroke-width="1"/>
<line x1="216.14" y1="130.5" x2="216.14" y2="146" stroke="#00e400" stroke-width="1.1"/>
<rect x="211.84" y="137" width="8.60" height="2.50" fill="#fff" stroke="#00e400" stroke-width="1"/>
<line x1="229.32" y1="129.25" x2="229.32" y2="151.75" stroke="#00e400" stroke-width="1.1"/>
<rect x="225.02" y="141" width="8.60" height="10.50" fill="#fff" stroke="#00e400" stroke-width="1"/>
<line x1="242.49" y1="135.5" x2="242.49" y2="165.5" stroke="#00e400" stroke-width="1.1"/>
<rect x="238.19" y="139.5" width="8.60" height="12.00" fill="#000" stroke="#00e400" stroke-width="1"/>
<line x1="255.67" y1="136" x2="255.67" y2="155" stroke="#00e400" stroke-width="1.1"/>
<rect x="251.37" y="139.5" width="8.60" height="10.00" fill="#fff" stroke="#00e400" stroke-width="1"/>
<line x1="268.84" y1="139.25" x2="268.84" y2="164.25" stroke="#00e400" stroke-width="1.1"/>
<rect x="264.54" y="149" width="8.60" height="9.50" fill="#fff" stroke="#00e400" stroke-width="1"/>
<line x1="282.02" y1="145" x2="282.02" y2="163" stroke="#00e400" stroke-width="1.1"/>
<line x1="277.42" y1="161.5" x2="286.62" y2="161.5" stroke="#00e400" stroke-width="1.2"/>
<line x1="295.20" y1="154.25" x2="295.20" y2="168" stroke="#00e400" stroke-width="1.1"/>
<rect x="290.90" y="157.5" width="8.60" height="4.50" fill="#000" stroke="#00e400" stroke-width="1"/>
<line x1="308.37" y1="130.5" x2="308.37" y2="158.5" stroke="#00e400" stroke-width="1.1"/>
<rect x="304.07" y="131" width="8.60" height="25.75" fill="#000" stroke="#00e400" stroke-width="1"/>
<line x1="321.55" y1="131.75" x2="321.55" y2="148" stroke="#00e400" stroke-width="1.1"/>
<rect x="317.25" y="132.25" width="8.60" height="13.25" fill="#fff" stroke="#00e400" stroke-width="1"/>
<line x1="334.72" y1="132.5" x2="334.72" y2="152.5" stroke="#00e400" stroke-width="1.1"/>
<rect x="330.42" y="135.5" width="8.60" height="10.00" fill="#000" stroke="#00e400" stroke-width="1"/>
<line x1="347.90" y1="120" x2="347.90" y2="136" stroke="#00e400" stroke-width="1.1"/>
<rect x="343.60" y="128.5" width="8.60" height="7.00" fill="#000" stroke="#00e400" stroke-width="1"/>
<line x1="361.08" y1="111.75" x2="361.08" y2="137.5" stroke="#00e400" stroke-width="1.1"/>
<rect x="356.78" y="116.25" width="8.60" height="12.25" fill="#000" stroke="#00e400" stroke-width="1"/>
<line x1="374.25" y1="114.25" x2="374.25" y2="131" stroke="#00e400" stroke-width="1.1"/>
<rect x="369.95" y="117" width="8.60" height="10.00" fill="#fff" stroke="#00e400" stroke-width="1"/>
<line x1="387.43" y1="116" x2="387.43" y2="134.25" stroke="#00e400" stroke-width="1.1"/>
<rect x="383.13" y="116.25" width="8.60" height="10.50" fill="#000" stroke="#00e400" stroke-width="1"/>
<line x1="400.60" y1="111" x2="400.60" y2="121.75" stroke="#00e400" stroke-width="1.1"/>
<rect x="396.30" y="112.25" width="8.60" height="5.25" fill="#000" stroke="#00e400" stroke-width="1"/>
<line x1="413.78" y1="111" x2="413.78" y2="121.75" stroke="#00e400" stroke-width="1.1"/>
<rect x="409.48" y="112.25" width="8.60" height="5.75" fill="#fff" stroke="#00e400" stroke-width="1"/>
<line x1="426.96" y1="109.25" x2="426.96" y2="126.75" stroke="#00e400" stroke-width="1.1"/>
<line x1="422.36" y1="118.25" x2="431.56" y2="118.25" stroke="#00e400" stroke-width="1.2"/>
<line x1="440.13" y1="108.5" x2="440.13" y2="171.25" stroke="#00e400" stroke-width="1.1"/>
<rect x="435.83" y="118" width="8.60" height="48.50" fill="#fff" stroke="#00e400" stroke-width="1"/>
<line x1="453.31" y1="162.5" x2="453.31" y2="210.5" stroke="#00e400" stroke-width="1.1"/>
<rect x="449.01" y="166.5" width="8.60" height="43.00" fill="#fff" stroke="#00e400" stroke-width="1"/>
<line x1="466.48" y1="208" x2="466.48" y2="243" stroke="#00e400" stroke-width="1.1"/>
<rect x="462.18" y="210" width="8.60" height="21.00" fill="#fff" stroke="#00e400" stroke-width="1"/>
<line x1="479.66" y1="225" x2="479.66" y2="270" stroke="#00e400" stroke-width="1.1"/>
<rect x="475.36" y="230" width="8.60" height="25.00" fill="#fff" stroke="#00e400" stroke-width="1"/>
<line x1="492.84" y1="250.75" x2="492.84" y2="277" stroke="#00e400" stroke-width="1.1"/>
<rect x="488.54" y="256.25" width="8.60" height="4.00" fill="#fff" stroke="#00e400" stroke-width="1"/>
<line x1="506.01" y1="216.75" x2="506.01" y2="265.75" stroke="#00e400" stroke-width="1.1"/>
<rect x="501.71" y="252.5" width="8.60" height="7.75" fill="#000" stroke="#00e400" stroke-width="1"/>
<line x1="519.19" y1="237.5" x2="519.19" y2="259.5" stroke="#00e400" stroke-width="1.1"/>
<rect x="514.89" y="240.5" width="8.60" height="10.50" fill="#000" stroke="#00e400" stroke-width="1"/>
<line x1="532.36" y1="228" x2="532.36" y2="280" stroke="#00e400" stroke-width="1.1"/>
<rect x="528.06" y="240.75" width="8.60" height="39.25" fill="#fff" stroke="#00e400" stroke-width="1"/>
<line x1="545.54" y1="279" x2="545.54" y2="358.25" stroke="#00e400" stroke-width="1.1"/>
<rect x="541.24" y="279" width="8.60" height="68.00" fill="#fff" stroke="#00e400" stroke-width="1"/>
<line x1="558.72" y1="327" x2="558.72" y2="389" stroke="#00e400" stroke-width="1.1"/>
<rect x="554.42" y="342.5" width="8.60" height="4.50" fill="#000" stroke="#00e400" stroke-width="1"/>
<line x1="571.89" y1="279" x2="571.89" y2="362.5" stroke="#00e400" stroke-width="1.1"/>
<rect x="567.59" y="308.25" width="8.60" height="36.25" fill="#000" stroke="#00e400" stroke-width="1"/>
<line x1="585.07" y1="208.5" x2="585.07" y2="313.25" stroke="#00e400" stroke-width="1.1"/>
<rect x="580.77" y="217.5" width="8.60" height="87.00" fill="#000" stroke="#00e400" stroke-width="1"/>
<line x1="598.24" y1="168" x2="598.24" y2="216.75" stroke="#00e400" stroke-width="1.1"/>
<rect x="593.94" y="195.5" width="8.60" height="20.00" fill="#000" stroke="#00e400" stroke-width="1"/>
<line x1="611.42" y1="169.25" x2="611.42" y2="213" stroke="#00e400" stroke-width="1.1"/>
<rect x="607.12" y="195.5" width="8.60" height="14.00" fill="#fff" stroke="#00e400" stroke-width="1"/>
<line x1="624.60" y1="170.5" x2="624.60" y2="215.5" stroke="#00e400" stroke-width="1.1"/>
<rect x="620.30" y="180.5" width="8.60" height="28.00" fill="#000" stroke="#00e400" stroke-width="1"/>
<line x1="637.77" y1="172.25" x2="637.77" y2="195.5" stroke="#00e400" stroke-width="1.1"/>
<rect x="633.47" y="181" width="8.60" height="3.50" fill="#fff" stroke="#00e400" stroke-width="1"/>
<line x1="650.95" y1="169.25" x2="650.95" y2="203.75" stroke="#00e400" stroke-width="1.1"/>
<rect x="646.65" y="183" width="8.60" height="13.75" fill="#fff" stroke="#00e400" stroke-width="1"/>
<line x1="664.12" y1="188.5" x2="664.12" y2="210" stroke="#00e400" stroke-width="1.1"/>
<line x1="659.52" y1="196.5" x2="668.72" y2="196.5" stroke="#00e400" stroke-width="1.2"/>
<line x1="677.30" y1="180" x2="677.30" y2="199.25" stroke="#00e400" stroke-width="1.1"/>
<rect x="673.00" y="196" width="8.60" height="2.00" fill="#fff" stroke="#00e400" stroke-width="1"/>
<line x1="690.48" y1="188" x2="690.48" y2="214.25" stroke="#00e400" stroke-width="1.1"/>
<rect x="686.18" y="197.25" width="8.60" height="8.75" fill="#fff" stroke="#00e400" stroke-width="1"/>
<line x1="703.65" y1="204.25" x2="703.65" y2="228.5" stroke="#00e400" stroke-width="1.1"/>
<rect x="699.35" y="207.25" width="8.60" height="4.50" fill="#fff" stroke="#00e400" stroke-width="1"/>
<line x1="716.83" y1="208" x2="716.83" y2="226.75" stroke="#00e400" stroke-width="1.1"/>
<rect x="712.53" y="213.5" width="8.60" height="11.50" fill="#fff" stroke="#00e400" stroke-width="1"/>
<line x1="730.00" y1="218" x2="730.00" y2="235" stroke="#00e400" stroke-width="1.1"/>
<rect x="725.70" y="225" width="8.60" height="6.50" fill="#fff" stroke="#00e400" stroke-width="1"/>
<line x1="743.18" y1="231.25" x2="743.18" y2="276.25" stroke="#00e400" stroke-width="1.1"/>
<rect x="738.88" y="231.5" width="8.60" height="33.00" fill="#fff" stroke="#00e400" stroke-width="1"/>
<line x1="756.36" y1="260" x2="756.36" y2="290" stroke="#00e400" stroke-width="1.1"/>
<rect x="752.06" y="264.5" width="8.60" height="24.75" fill="#fff" stroke="#00e400" stroke-width="1"/>
<line x1="769.53" y1="267.5" x2="769.53" y2="290" stroke="#00e400" stroke-width="1.1"/>
<rect x="765.23" y="275.5" width="8.60" height="13.00" fill="#000" stroke="#00e400" stroke-width="1"/>
<line x1="782.71" y1="271.25" x2="782.71" y2="285.5" stroke="#00e400" stroke-width="1.1"/>
<rect x="778.41" y="275" width="8.60" height="1.75" fill="#fff" stroke="#00e400" stroke-width="1"/>
<line x1="795.88" y1="262.5" x2="795.88" y2="277.5" stroke="#00e400" stroke-width="1.1"/>
<rect x="791.58" y="268.5" width="8.60" height="8.50" fill="#000" stroke="#00e400" stroke-width="1"/>
<line x1="809.06" y1="266.75" x2="809.06" y2="281.25" stroke="#00e400" stroke-width="1.1"/>
<rect x="804.76" y="268.25" width="8.60" height="12.50" fill="#fff" stroke="#00e400" stroke-width="1"/>
<line x1="822.24" y1="275.5" x2="822.24" y2="284.5" stroke="#00e400" stroke-width="1.1"/>
<line x1="817.64" y1="281.25" x2="826.84" y2="281.25" stroke="#00e400" stroke-width="1.2"/>
<line x1="835.41" y1="274" x2="835.41" y2="300" stroke="#00e400" stroke-width="1.1"/>
<rect x="831.11" y="283.5" width="8.60" height="14.00" fill="#fff" stroke="#00e400" stroke-width="1"/>
<line x1="848.59" y1="291.25" x2="848.59" y2="322" stroke="#00e400" stroke-width="1.1"/>
<rect x="844.29" y="299.25" width="8.60" height="4.75" fill="#fff" stroke="#00e400" stroke-width="1"/>
<line x1="861.76" y1="291.25" x2="861.76" y2="308.75" stroke="#00e400" stroke-width="1.1"/>
<rect x="857.46" y="304" width="8.60" height="2.00" fill="#fff" stroke="#00e400" stroke-width="1"/>
<line x1="874.94" y1="287.5" x2="874.94" y2="306.25" stroke="#00e400" stroke-width="1.1"/>
<rect x="870.64" y="288.25" width="8.60" height="17.50" fill="#000" stroke="#00e400" stroke-width="1"/>
<line x1="888.12" y1="283.25" x2="888.12" y2="308.25" stroke="#00e400" stroke-width="1.1"/>
<rect x="883.82" y="286.25" width="8.60" height="4.00" fill="#000" stroke="#00e400" stroke-width="1"/>
<line x1="901.29" y1="282" x2="901.29" y2="295.75" stroke="#00e400" stroke-width="1.1"/>
<rect x="896.99" y="285.25" width="8.60" height="3.25" fill="#fff" stroke="#00e400" stroke-width="1"/>
<line x1="914.47" y1="285" x2="914.47" y2="295.5" stroke="#00e400" stroke-width="1.1"/>
<line x1="909.87" y1="288.25" x2="919.07" y2="288.25" stroke="#00e400" stroke-width="1.2"/>
<line x1="927.64" y1="288.25" x2="927.64" y2="320" stroke="#00e400" stroke-width="1.1"/>
<rect x="923.34" y="288.25" width="8.60" height="28.00" fill="#fff" stroke="#00e400" stroke-width="1"/>
<line x1="940.82" y1="314.25" x2="940.82" y2="332.5" stroke="#00e400" stroke-width="1.1"/>
<rect x="936.52" y="316.25" width="8.60" height="14.75" fill="#fff" stroke="#00e400" stroke-width="1"/>
<line x1="954.00" y1="331" x2="954.00" y2="343" stroke="#00e400" stroke-width="1.1"/>
<rect x="949.70" y="331" width="8.60" height="3.25" fill="#fff" stroke="#00e400" stroke-width="1"/>
<line x1="5.4" y1="217.4" x2="583" y2="225" stroke="#0c0cee" stroke-width="1" stroke-dasharray="2.47 2.47"/>
<line x1="584" y1="228" x2="560.5" y2="356" stroke="#0c0cee" stroke-width="0.9" stroke-dasharray="2.47 2.47"/>
<line x1="5.4" y1="336" x2="555" y2="358.4" stroke="#ec0808" stroke-width="1" stroke-dasharray="2.47 2.47"/>
<path d="M584 225L588.6 221.4V228.6Z" fill="#1010ff" stroke="#f0f0ff" stroke-width="0.7"/>
<path d="M619.3 185.5L622.3 182.5L625.3 185.5L622.3 188.5Z" fill="#1010ff" stroke="#f0f0ff" stroke-width="0.8"/>
<path d="M557.4 358.2L561.4 355V361.4Z" fill="#ff2020" stroke="#ffe0e0" stroke-width="0.6"/>
<path d="M553.3 363.3L556.2 360.4L559.1 363.3L556.2 366.2Z" fill="#1010ff" stroke="#f0f0ff" stroke-width="0.8"/>
<path d="M566.6 342.5L569.5 339.6L572.4 342.5L569.5 345.4Z" fill="#ff1010" stroke="#fff0f0" stroke-width="0.8"/>
<path d="M7.8 95.3H12.8L10.3 98.6Z" fill="#fff"/>
<text x="16.9" y="100" font-family="Liberation Sans, Arial, sans-serif" font-size="8.5" fill="#e4e4e4" textLength="48" lengthAdjust="spacingAndGlyphs">AUDCAD,M5</text>
<text x="971" y="100.8" font-family="Liberation Sans, Arial, sans-serif" font-size="8.4" fill="#fff" text-anchor="end" textLength="69" lengthAdjust="spacingAndGlyphs">BALANCEA_Ver.5</text>
<circle cx="975.6" cy="97.6" r="3.6" fill="none" stroke="#fff" stroke-width="0.8"/>
<path d="M973.8 98.4Q975.6 100.3 977.4 98.4" fill="none" stroke="#fff" stroke-width="0.7"/><circle cx="974.3" cy="96.6" r="0.5" fill="#fff"/><circle cx="976.9" cy="96.6" r="0.5" fill="#fff"/>
<text x="54.7" y="183.7" font-family="Liberation Sans, Arial, sans-serif" font-size="8.3" fill="#f4f4f4" textLength="31.2" lengthAdjust="spacingAndGlyphs">buy 0.04</text>
<text x="54.7" y="340.8" font-family="Liberation Sans, Arial, sans-serif" font-size="8.3" fill="#f4f4f4" textLength="28.7" lengthAdjust="spacingAndGlyphs">sell 0.04</text>
<rect x="5.4" y="95.45" width="978.6" height="1.35" fill="#5a90f2"/>
<line x1="984.4" y1="105.7" x2="986.4" y2="105.7" stroke="#dcdcdc" stroke-width="0.9"/>
<text x="987.8" y="108.7" font-family="Liberation Sans, Arial, sans-serif" font-size="8.7" fill="#f0f0f0" textLength="27.4" lengthAdjust="spacingAndGlyphs">0.97965</text>
<line x1="984.4" y1="135.2" x2="986.4" y2="135.2" stroke="#dcdcdc" stroke-width="0.9"/>
<text x="987.8" y="138.2" font-family="Liberation Sans, Arial, sans-serif" font-size="8.7" fill="#f0f0f0" textLength="27.4" lengthAdjust="spacingAndGlyphs">0.97915</text>
<line x1="984.4" y1="161.8" x2="986.4" y2="161.8" stroke="#dcdcdc" stroke-width="0.9"/>
<text x="987.8" y="164.8" font-family="Liberation Sans, Arial, sans-serif" font-size="8.7" fill="#f0f0f0" textLength="27.4" lengthAdjust="spacingAndGlyphs">0.97870</text>
<line x1="984.4" y1="191.3" x2="986.4" y2="191.3" stroke="#dcdcdc" stroke-width="0.9"/>
<text x="987.8" y="194.3" font-family="Liberation Sans, Arial, sans-serif" font-size="8.7" fill="#f0f0f0" textLength="27.4" lengthAdjust="spacingAndGlyphs">0.97820</text>
<line x1="984.4" y1="220.8" x2="986.4" y2="220.8" stroke="#dcdcdc" stroke-width="0.9"/>
<text x="987.8" y="223.8" font-family="Liberation Sans, Arial, sans-serif" font-size="8.7" fill="#f0f0f0" textLength="27.4" lengthAdjust="spacingAndGlyphs">0.97770</text>
<line x1="984.4" y1="247.8" x2="986.4" y2="247.8" stroke="#dcdcdc" stroke-width="0.9"/>
<text x="987.8" y="250.8" font-family="Liberation Sans, Arial, sans-serif" font-size="8.7" fill="#f0f0f0" textLength="27.4" lengthAdjust="spacingAndGlyphs">0.97725</text>
<line x1="984.4" y1="277.1" x2="986.4" y2="277.1" stroke="#dcdcdc" stroke-width="0.9"/>
<text x="987.8" y="280.1" font-family="Liberation Sans, Arial, sans-serif" font-size="8.7" fill="#f0f0f0" textLength="27.4" lengthAdjust="spacingAndGlyphs">0.97675</text>
<line x1="984.4" y1="306.5" x2="986.4" y2="306.5" stroke="#dcdcdc" stroke-width="0.9"/>
<text x="987.8" y="309.5" font-family="Liberation Sans, Arial, sans-serif" font-size="8.7" fill="#f0f0f0" textLength="27.4" lengthAdjust="spacingAndGlyphs">0.97625</text>
<line x1="984.4" y1="365.6" x2="986.4" y2="365.6" stroke="#dcdcdc" stroke-width="0.9"/>
<text x="987.8" y="368.6" font-family="Liberation Sans, Arial, sans-serif" font-size="8.7" fill="#f0f0f0" textLength="27.4" lengthAdjust="spacingAndGlyphs">0.97525</text>
<line x1="984.4" y1="395.3" x2="986.4" y2="395.3" stroke="#dcdcdc" stroke-width="0.9"/>
<text x="987.8" y="398.3" font-family="Liberation Sans, Arial, sans-serif" font-size="8.7" fill="#f0f0f0" textLength="27.4" lengthAdjust="spacingAndGlyphs">0.97475</text>
<rect x="986.6" y="92.4" width="31.5" height="7.8" fill="#5a90f2"/>
<text x="987.8" y="99.3" font-family="Liberation Sans, Arial, sans-serif" font-size="8.7" fill="#fff" textLength="27.4" lengthAdjust="spacingAndGlyphs">0.97981</text>
<rect x="986.3" y="330.7" width="31.6" height="7.9" fill="#fff"/>
<text x="987.8" y="337.6" font-family="Liberation Sans, Arial, sans-serif" font-size="8.7" fill="#000" textLength="27.4" lengthAdjust="spacingAndGlyphs">0.97578</text>
<line x1="5.50" y1="398" x2="5.50" y2="401" stroke="#e6e6e6" stroke-width="0.9"/>
<text x="3.80" y="409.7" font-family="Liberation Sans, Arial, sans-serif" font-size="8.7" fill="#fff" stroke="#fff" stroke-width="0.12" textLength="42.3" lengthAdjust="spacingAndGlyphs">23 Apr 2026</text>
<line x1="58.20" y1="398" x2="58.20" y2="401" stroke="#e6e6e6" stroke-width="0.9"/>
<text x="56.50" y="409.7" font-family="Liberation Sans, Arial, sans-serif" font-size="8.7" fill="#fff" stroke="#fff" stroke-width="0.12" textLength="44.8" lengthAdjust="spacingAndGlyphs">23 Apr 17:35</text>
<line x1="110.91" y1="398" x2="110.91" y2="401" stroke="#e6e6e6" stroke-width="0.9"/>
<text x="109.21" y="409.7" font-family="Liberation Sans, Arial, sans-serif" font-size="8.7" fill="#fff" stroke="#fff" stroke-width="0.12" textLength="44.8" lengthAdjust="spacingAndGlyphs">23 Apr 17:55</text>
<line x1="163.62" y1="398" x2="163.62" y2="401" stroke="#e6e6e6" stroke-width="0.9"/>
<text x="161.92" y="409.7" font-family="Liberation Sans, Arial, sans-serif" font-size="8.7" fill="#fff" stroke="#fff" stroke-width="0.12" textLength="44.8" lengthAdjust="spacingAndGlyphs">23 Apr 18:15</text>
<line x1="216.32" y1="398" x2="216.32" y2="401" stroke="#e6e6e6" stroke-width="0.9"/>
<text x="214.62" y="409.7" font-family="Liberation Sans, Arial, sans-serif" font-size="8.7" fill="#fff" stroke="#fff" stroke-width="0.12" textLength="44.8" lengthAdjust="spacingAndGlyphs">23 Apr 18:35</text>
<line x1="269.02" y1="398" x2="269.02" y2="401" stroke="#e6e6e6" stroke-width="0.9"/>
<text x="267.32" y="409.7" font-family="Liberation Sans, Arial, sans-serif" font-size="8.7" fill="#fff" stroke="#fff" stroke-width="0.12" textLength="44.8" lengthAdjust="spacingAndGlyphs">23 Apr 18:55</text>
<line x1="321.73" y1="398" x2="321.73" y2="401" stroke="#e6e6e6" stroke-width="0.9"/>
<text x="320.03" y="409.7" font-family="Liberation Sans, Arial, sans-serif" font-size="8.7" fill="#fff" stroke="#fff" stroke-width="0.12" textLength="44.8" lengthAdjust="spacingAndGlyphs">23 Apr 19:15</text>
<line x1="374.44" y1="398" x2="374.44" y2="401" stroke="#e6e6e6" stroke-width="0.9"/>
<text x="372.74" y="409.7" font-family="Liberation Sans, Arial, sans-serif" font-size="8.7" fill="#fff" stroke="#fff" stroke-width="0.12" textLength="44.8" lengthAdjust="spacingAndGlyphs">23 Apr 19:35</text>
<line x1="427.14" y1="398" x2="427.14" y2="401" stroke="#e6e6e6" stroke-width="0.9"/>
<text x="425.44" y="409.7" font-family="Liberation Sans, Arial, sans-serif" font-size="8.7" fill="#fff" stroke="#fff" stroke-width="0.12" textLength="44.8" lengthAdjust="spacingAndGlyphs">23 Apr 19:55</text>
<line x1="479.84" y1="398" x2="479.84" y2="401" stroke="#e6e6e6" stroke-width="0.9"/>
<text x="478.14" y="409.7" font-family="Liberation Sans, Arial, sans-serif" font-size="8.7" fill="#fff" stroke="#fff" stroke-width="0.12" textLength="44.8" lengthAdjust="spacingAndGlyphs">23 Apr 20:15</text>
<line x1="532.55" y1="398" x2="532.55" y2="401" stroke="#e6e6e6" stroke-width="0.9"/>
<text x="530.85" y="409.7" font-family="Liberation Sans, Arial, sans-serif" font-size="8.7" fill="#fff" stroke="#fff" stroke-width="0.12" textLength="44.8" lengthAdjust="spacingAndGlyphs">23 Apr 20:35</text>
<line x1="585.25" y1="398" x2="585.25" y2="401" stroke="#e6e6e6" stroke-width="0.9"/>
<text x="583.55" y="409.7" font-family="Liberation Sans, Arial, sans-serif" font-size="8.7" fill="#fff" stroke="#fff" stroke-width="0.12" textLength="44.8" lengthAdjust="spacingAndGlyphs">23 Apr 20:55</text>
<line x1="637.96" y1="398" x2="637.96" y2="401" stroke="#e6e6e6" stroke-width="0.9"/>
<text x="636.26" y="409.7" font-family="Liberation Sans, Arial, sans-serif" font-size="8.7" fill="#fff" stroke="#fff" stroke-width="0.12" textLength="44.8" lengthAdjust="spacingAndGlyphs">23 Apr 21:15</text>
<line x1="690.66" y1="398" x2="690.66" y2="401" stroke="#e6e6e6" stroke-width="0.9"/>
<text x="688.96" y="409.7" font-family="Liberation Sans, Arial, sans-serif" font-size="8.7" fill="#fff" stroke="#fff" stroke-width="0.12" textLength="44.8" lengthAdjust="spacingAndGlyphs">23 Apr 21:35</text>
<line x1="743.37" y1="398" x2="743.37" y2="401" stroke="#e6e6e6" stroke-width="0.9"/>
<text x="741.67" y="409.7" font-family="Liberation Sans, Arial, sans-serif" font-size="8.7" fill="#fff" stroke="#fff" stroke-width="0.12" textLength="44.8" lengthAdjust="spacingAndGlyphs">23 Apr 21:55</text>
<line x1="796.07" y1="398" x2="796.07" y2="401" stroke="#e6e6e6" stroke-width="0.9"/>
<text x="794.37" y="409.7" font-family="Liberation Sans, Arial, sans-serif" font-size="8.7" fill="#fff" stroke="#fff" stroke-width="0.12" textLength="44.8" lengthAdjust="spacingAndGlyphs">23 Apr 22:15</text>
<line x1="848.78" y1="398" x2="848.78" y2="401" stroke="#e6e6e6" stroke-width="0.9"/>
<text x="847.08" y="409.7" font-family="Liberation Sans, Arial, sans-serif" font-size="8.7" fill="#fff" stroke="#fff" stroke-width="0.12" textLength="44.8" lengthAdjust="spacingAndGlyphs">23 Apr 22:35</text>
<line x1="901.49" y1="398" x2="901.49" y2="401" stroke="#e6e6e6" stroke-width="0.9"/>
<text x="899.78" y="409.7" font-family="Liberation Sans, Arial, sans-serif" font-size="8.7" fill="#fff" stroke="#fff" stroke-width="0.12" textLength="44.8" lengthAdjust="spacingAndGlyphs">23 Apr 22:55</text>
<line x1="954.19" y1="398" x2="954.19" y2="401" stroke="#e6e6e6" stroke-width="0.9"/>
<text x="952.49" y="409.7" font-family="Liberation Sans, Arial, sans-serif" font-size="8.7" fill="#fff" stroke="#fff" stroke-width="0.12" textLength="44.8" lengthAdjust="spacingAndGlyphs">23 Apr 23:15</text>
</svg>
<!-- gap under chart -->
<div class="abs" style="left:1px;top:415.4px;width:1022px;height:5px;background:#f0f0f0"></div>
<!-- left side strip -->
<div class="abs" style="left:1px;top:420px;width:12.5px;height:203px;background:#f0f0f0"></div>
<div class="abs" style="left:1px;top:431px;width:11.6px;height:192.4px;background:#c9d9ea"></div>
<svg class="abs" style="left:3.6px;top:421.4px" width="6" height="6" viewBox="0 0 6 6"><path d="M0.8 0.8L5 5M5 0.8L0.8 5" stroke="#111" stroke-width="1.2"/></svg>
<div class="abs" style="left:12.8px;top:419.6px;width:1008.2px;height:1.2px;background:#d4d4d4"></div>
<div class="abs" style="left:12.6px;top:420px;width:1px;height:203.4px;background:#dcdcdc"></div>
<div id="term" class="abs">
 <!-- header -->
 <div class="abs" style="left:0;top:20px;width:1007.5px;height:1px;background:#dcdcdc"></div>
 <!-- rows -->
 <div class="row" style="top:20.6px;background:#fff"></div>
 <div class="row" style="top:37px;background:#efefef"></div>
 <div class="row" style="top:53.6px;background:#cccccc;height:16.2px"></div>
 <!-- vertical lines -->
 <div class="vl" style="left:99.5px;height:53.6px"></div>
 <div class="vl" style="left:236.5px;height:53.6px"></div>
 <div class="vl" style="left:304.5px;height:53.6px"></div>
 <div class="vl" style="left:359px;height:53.6px"></div>
 <div class="vl" style="left:428px;height:53.6px"></div>
 <div class="vl" style="left:502.5px;height:53.6px"></div>
 <div class="vl" style="left:579.5px;height:53.6px"></div>
 <div class="vl" style="left:656.5px;height:53.6px"></div>
 <div class="vl" style="left:732.5px;height:53.6px"></div>
 <div class="vl" style="left:809.5px;height:53.6px"></div>
 <div class="vl" style="left:886.5px;height:53.6px"></div>
 <div class="abs" style="left:0;top:37px;width:1007.5px;height:1px;background:#e4e4e4"></div>
 <!-- row 1 -->
 <div class="row" style="top:20.6px">
 </div>
 <div class="row" style="top:37px">
 </div>
 <div class="row" style="top:53.6px;height:16.2px">
 </div>
 <!-- row icons -->
 <svg class="abs" style="left:0;top:20px" width="20" height="52" viewBox="0 0 20 52">
  <path d="M3.2 2.4H9L11.4 4.8V13.6H3.2Z" fill="#fdfdfd" stroke="#8a8a8a" stroke-width="0.9"/><circle cx="11.4" cy="12.8" r="2.7" fill="#e8491f" stroke="#b8300c" stroke-width="0.5"/>
  <path d="M3.2 18.8H9L11.4 21.2V30H3.2Z" fill="#fdfdfd" stroke="#8a8a8a" stroke-width="0.9"/><circle cx="11.4" cy="29.2" r="2.7" fill="#2f9be8" stroke="#1c70c0" stroke-width="0.5"/>
  <rect x="3.4" y="36.4" width="9" height="10.4" rx="1" fill="#fdfdfd" stroke="#9a9a9a" stroke-width="0.9"/>
  <path d="M6.8 38.6H9V41.4H10.6L7.9 44.8L5.2 41.4H6.8Z" fill="#e8491f"/>
 </svg>
</div>
<!-- right border of terminal -->
<div class="abs" style="left:1020px;top:420px;width:1px;height:185px;background:#cfcfcf"></div><div class="abs" style="left:1021px;top:420px;width:2px;height:204px;background:#f0f0f0"></div>
<!-- tab bar -->
<div class="abs" style="left:13.5px;top:604.6px;width:1008px;height:18.6px;background:#f0f0f0"></div>
<div class="abs" style="left:13.5px;top:604.8px;width:1006.6px;height:1.2px;background:#4a4a4a"></div>
<div class="abs" style="left:15.4px;top:603.8px;width:36.6px;height:17.6px;background:#fff;border:1.2px solid #444;border-top:none"></div>

<div class="tsep" style="left:108.8px"></div>
<div class="tsep" style="left:164.8px"></div>
<div class="tsep" style="left:208.8px"></div>
<div class="tsep" style="left:272.8px"></div>
<div class="tsep" style="left:344.8px"></div>
<div class="tsep" style="left:409.8px"></div>
<div class="tsep" style="left:446.2px"></div>
<div class="tsep" style="left:497.2px"></div>
<div class="tsep" style="left:557.8px"></div>
<div class="tsep" style="left:613.2px"></div>
<!-- status bar -->
<div class="abs" style="left:1px;top:624.4px;width:1022px;height:1.2px;background:#dcdcdc"></div>
<div class="abs" style="left:1px;top:625.6px;width:1022px;height:19px;background:#f0f0f0"></div>
<div class="ssep" style="left:437.8px"></div><div class="ssep" style="left:533px"></div><div class="ssep" style="left:617.4px"></div><div class="ssep" style="left:676px"></div><div class="ssep" style="left:734px"></div><div class="ssep" style="left:790px"></div><div class="ssep" style="left:847px"></div><div class="ssep" style="left:903px"></div>
<svg class="abs" style="left:905.6px;top:629.8px" width="20" height="13" viewBox="0 0 20 13"><g stroke-width="1.5"><path d="M1.6 1.6V11.4" stroke="#7f9c1e"/><path d="M3.8 1.6V11.4" stroke="#7f9c1e"/><path d="M6 1.6V11.4" stroke="#7f9c1e"/><path d="M8.2 1.6V11.4" stroke="#7f9c1e"/><path d="M10.4 1.6V11.4" stroke="#7f9c1e"/><path d="M12.6 1.6V11.4" stroke="#7f9c1e"/><path d="M14.8 1.6V11.4" stroke="#7f9c1e"/><path d="M17 1.6V11.4" stroke="#7f9c1e"/></g><g stroke="#1f5f94" stroke-width="1.5"><path d="M1.6 10.6V11.4M3.8 9.6V11.4M6 8.6V11.4M8.2 7.4V11.4M10.4 6.2V11.4M12.6 5V11.4M14.8 3.8V11.4M17 2.6V11.4"/></g></svg>
<svg class="abs" style="left:1009px;top:632px" width="12" height="12" viewBox="0 0 12 12"><path d="M11 2L2 11M11 5.4L5.4 11M11 8.6L8.6 11" stroke="#b4b4b4" stroke-width="1"/></svg>

<svg class="abs" style="left:0;top:0;z-index:40" width="1024" height="646" viewBox="0 0 1024 646">
<text x="69.50" y="16.9" textLength="110.90" lengthAdjust="spacingAndGlyphs" font-family="Liberation Sans,sans-serif" font-size="10.4" fill="#000" stroke="#000" stroke-width="0.16">: XMTradingMU-Demo 6 -</text>
<text x="182.80" y="16.9" textLength="34.40" lengthAdjust="spacingAndGlyphs" font-family="Noto Sans CJK JP,sans-serif" font-size="10.2" fill="#000" stroke="#000" stroke-width="0.16">デモ口座</text>
<text x="219.60" y="16.9" textLength="147.55" lengthAdjust="spacingAndGlyphs" font-family="Liberation Sans,sans-serif" font-size="10.4" fill="#000" stroke="#000" stroke-width="0.16">- FinTrade Limited - [AUDCAD,M5]</text>
<text x="23.00" y="37.3" textLength="28.20" lengthAdjust="spacingAndGlyphs" font-family="Noto Sans CJK JP,sans-serif" font-size="10.4" fill="#000" stroke="#000" stroke-width="0.16">ファイル</text>
<text x="54.30" y="37.3" textLength="10.90" lengthAdjust="spacingAndGlyphs" font-family="Liberation Sans,sans-serif" font-size="10.3" fill="#000" stroke="#000" stroke-width="0.16">(F)</text>
<text x="80.90" y="37.3" textLength="18.90" lengthAdjust="spacingAndGlyphs" font-family="Noto Sans CJK JP,sans-serif" font-size="10.4" fill="#000" stroke="#000" stroke-width="0.16">表示</text>
<text x="102.80" y="37.3" textLength="12.35" lengthAdjust="spacingAndGlyphs" font-family="Liberation Sans,sans-serif" font-size="10.3" fill="#000" stroke="#000" stroke-width="0.16">(V)</text>
<text x="130.40" y="37.3" textLength="19.00" lengthAdjust="spacingAndGlyphs" font-family="Noto Sans CJK JP,sans-serif" font-size="10.4" fill="#000" stroke="#000" stroke-width="0.16">挿入</text>
<text x="149.00" y="37.3" textLength="9.60" lengthAdjust="spacingAndGlyphs" font-family="Liberation Sans,sans-serif" font-size="10.3" fill="#000" stroke="#000" stroke-width="0.16">(I)</text>
<text x="173.40" y="37.3" textLength="27.60" lengthAdjust="spacingAndGlyphs" font-family="Noto Sans CJK JP,sans-serif" font-size="10.4" fill="#000" stroke="#000" stroke-width="0.16">チャート</text>
<text x="203.80" y="37.3" textLength="11.35" lengthAdjust="spacingAndGlyphs" font-family="Liberation Sans,sans-serif" font-size="10.3" fill="#000" stroke="#000" stroke-width="0.16">(C)</text>
<text x="229.60" y="37.3" textLength="22.40" lengthAdjust="spacingAndGlyphs" font-family="Noto Sans CJK JP,sans-serif" font-size="10.4" fill="#000" stroke="#000" stroke-width="0.16">ツール</text>
<text x="255.00" y="37.3" textLength="11.00" lengthAdjust="spacingAndGlyphs" font-family="Liberation Sans,sans-serif" font-size="10.3" fill="#000" stroke="#000" stroke-width="0.16">(T)</text>
<text x="281.35" y="37.3" textLength="35.45" lengthAdjust="spacingAndGlyphs" font-family="Noto Sans CJK JP,sans-serif" font-size="10.4" fill="#000" stroke="#000" stroke-width="0.16">ウィンドウ</text>
<text x="319.80" y="37.3" textLength="14.60" lengthAdjust="spacingAndGlyphs" font-family="Liberation Sans,sans-serif" font-size="10.3" fill="#000" stroke="#000" stroke-width="0.16">(W)</text>
<text x="349.35" y="37.3" textLength="24.45" lengthAdjust="spacingAndGlyphs" font-family="Noto Sans CJK JP,sans-serif" font-size="10.4" fill="#000" stroke="#000" stroke-width="0.16">ヘルプ</text>
<text x="376.80" y="37.3" textLength="12.10" lengthAdjust="spacingAndGlyphs" font-family="Liberation Sans,sans-serif" font-size="10.3" fill="#000" stroke="#000" stroke-width="0.16">(H)</text>
<text x="213.35" y="57.5" textLength="39.25" lengthAdjust="spacingAndGlyphs" font-family="Noto Sans CJK JP,sans-serif" font-size="10.2" fill="#000" stroke="#000" stroke-width="0.16">新規注文</text>
<text x="349.00" y="57.5" textLength="38.60" lengthAdjust="spacingAndGlyphs" font-family="Noto Sans CJK JP,sans-serif" font-size="10.2" fill="#000" stroke="#000" stroke-width="0.16">自動売買</text>
<text x="261.90" y="80" textLength="11.20" lengthAdjust="spacingAndGlyphs" font-family="Liberation Sans,sans-serif" font-size="8.6" fill="#383838" stroke="#383838" stroke-width="0.16">M1</text>
<text x="284.70" y="80" textLength="11.60" lengthAdjust="spacingAndGlyphs" font-family="Liberation Sans,sans-serif" font-size="8.6" fill="#6c6c6c" stroke="#6c6c6c" stroke-width="0.16">M5</text>
<text x="306.60" y="80" textLength="14.95" lengthAdjust="spacingAndGlyphs" font-family="Liberation Sans,sans-serif" font-size="8.6" fill="#383838" stroke="#383838" stroke-width="0.16">M15</text>
<text x="329.50" y="80" textLength="15.20" lengthAdjust="spacingAndGlyphs" font-family="Liberation Sans,sans-serif" font-size="8.6" fill="#383838" stroke="#383838" stroke-width="0.16">M30</text>
<text x="355.00" y="80" textLength="10.00" lengthAdjust="spacingAndGlyphs" font-family="Liberation Sans,sans-serif" font-size="8.6" fill="#383838" stroke="#383838" stroke-width="0.16">H1</text>
<text x="377.20" y="80" textLength="10.80" lengthAdjust="spacingAndGlyphs" font-family="Liberation Sans,sans-serif" font-size="8.6" fill="#383838" stroke="#383838" stroke-width="0.16">H4</text>
<text x="400.95" y="80" textLength="9.95" lengthAdjust="spacingAndGlyphs" font-family="Liberation Sans,sans-serif" font-size="8.6" fill="#383838" stroke="#383838" stroke-width="0.16">D1</text>
<text x="423.70" y="80" textLength="12.20" lengthAdjust="spacingAndGlyphs" font-family="Liberation Sans,sans-serif" font-size="8.6" fill="#383838" stroke="#383838" stroke-width="0.16">W1</text>
<text x="445.70" y="80" textLength="12.60" lengthAdjust="spacingAndGlyphs" font-family="Liberation Sans,sans-serif" font-size="8.6" fill="#383838" stroke="#383838" stroke-width="0.16">MN</text>
<text x="19.10" y="434.3" textLength="39.30" lengthAdjust="spacingAndGlyphs" font-family="Noto Sans CJK JP,sans-serif" font-size="10.4" fill="#000" stroke="#000" stroke-width="0.16">注文番号</text>
<text x="68.20" y="433.6" textLength="3.80" lengthAdjust="spacingAndGlyphs" font-family="Liberation Sans,sans-serif" font-size="8" fill="#808080" stroke="#808080" stroke-width="0.16" font-style="italic">/</text>
<text x="226.60" y="434.3" textLength="20.05" lengthAdjust="spacingAndGlyphs" font-family="Noto Sans CJK JP,sans-serif" font-size="10.4" fill="#000" stroke="#000" stroke-width="0.16">時間</text>
<text x="275.60" y="434.3" textLength="38.80" lengthAdjust="spacingAndGlyphs" font-family="Noto Sans CJK JP,sans-serif" font-size="10.4" fill="#000" stroke="#000" stroke-width="0.16">取引種別</text>
<text x="348.60" y="434.3" textLength="19.05" lengthAdjust="spacingAndGlyphs" font-family="Noto Sans CJK JP,sans-serif" font-size="10.4" fill="#000" stroke="#000" stroke-width="0.16">数量</text>
<text x="401.35" y="434.3" textLength="35.05" lengthAdjust="spacingAndGlyphs" font-family="Noto Sans CJK JP,sans-serif" font-size="10.4" fill="#000" stroke="#000" stroke-width="0.16">通貨ペア</text>
<text x="493.60" y="434.3" textLength="19.05" lengthAdjust="spacingAndGlyphs" font-family="Noto Sans CJK JP,sans-serif" font-size="10.4" fill="#000" stroke="#000" stroke-width="0.16">価格</text>
<text x="525.10" y="434.3" textLength="65.05" lengthAdjust="spacingAndGlyphs" font-family="Liberation Sans,Noto Sans CJK JP,sans-serif" font-size="10.4" fill="#000" stroke="#000" stroke-width="0.16">決済逆指値(S...</text>
<text x="605.60" y="434.3" textLength="60.30" lengthAdjust="spacingAndGlyphs" font-family="Liberation Sans,Noto Sans CJK JP,sans-serif" font-size="10.4" fill="#000" stroke="#000" stroke-width="0.16">決済指値(T/P)</text>
<text x="723.10" y="434.3" textLength="18.80" lengthAdjust="spacingAndGlyphs" font-family="Noto Sans CJK JP,sans-serif" font-size="10.4" fill="#000" stroke="#000" stroke-width="0.16">価格</text>
<text x="790.10" y="434.3" textLength="29.05" lengthAdjust="spacingAndGlyphs" font-family="Noto Sans CJK JP,sans-serif" font-size="10.4" fill="#000" stroke="#000" stroke-width="0.16">手数料</text>
<text x="866.35" y="434.3" textLength="30.80" lengthAdjust="spacingAndGlyphs" font-family="Noto Sans CJK JP,sans-serif" font-size="10.4" fill="#000" stroke="#000" stroke-width="0.16">スワップ</text>
<text x="995.10" y="434.3" textLength="19.55" lengthAdjust="spacingAndGlyphs" font-family="Noto Sans CJK JP,sans-serif" font-size="10.4" fill="#000" stroke="#000" stroke-width="0.16">損益</text>
<text x="166.25" y="452" textLength="82.25" lengthAdjust="spacingAndGlyphs" font-family="Liberation Sans,sans-serif" font-size="10.3" fill="#000" stroke="#000" stroke-width="0.16">2026.04.23 20:50:00</text>
<text x="302.50" y="452" textLength="14.00" lengthAdjust="spacingAndGlyphs" font-family="Liberation Sans,sans-serif" font-size="10.3" fill="#000" stroke="#000" stroke-width="0.16">sell</text>
<text x="351.75" y="452" textLength="18.25" lengthAdjust="spacingAndGlyphs" font-family="Liberation Sans,sans-serif" font-size="10.3" fill="#000" stroke="#000" stroke-width="0.16">0.04</text>
<text x="405.50" y="452" textLength="32.25" lengthAdjust="spacingAndGlyphs" font-family="Liberation Sans,sans-serif" font-size="10.3" fill="#000" stroke="#000" stroke-width="0.16">audcad</text>
<text x="481.75" y="452" textLength="32.75" lengthAdjust="spacingAndGlyphs" font-family="Liberation Sans,sans-serif" font-size="10.3" fill="#000" stroke="#000" stroke-width="0.16">0.97564</text>
<text x="558.75" y="452" textLength="32.75" lengthAdjust="spacingAndGlyphs" font-family="Liberation Sans,sans-serif" font-size="10.3" fill="#000" stroke="#000" stroke-width="0.16">0.00000</text>
<text x="635.50" y="452" textLength="32.75" lengthAdjust="spacingAndGlyphs" font-family="Liberation Sans,sans-serif" font-size="10.3" fill="#000" stroke="#000" stroke-width="0.16">0.00000</text>
<text x="711.75" y="452" textLength="32.75" lengthAdjust="spacingAndGlyphs" font-family="Liberation Sans,sans-serif" font-size="10.3" fill="#000" stroke="#000" stroke-width="0.16">0.97615</text>
<text x="815.75" y="452" textLength="6.00" lengthAdjust="spacingAndGlyphs" font-family="Liberation Sans,sans-serif" font-size="10.3" fill="#000" stroke="#000" stroke-width="0.16">0</text>
<text x="892.00" y="452" textLength="6.00" lengthAdjust="spacingAndGlyphs" font-family="Liberation Sans,sans-serif" font-size="10.3" fill="#000" stroke="#000" stroke-width="0.16">0</text>
<text x="981.75" y="452" textLength="19.25" lengthAdjust="spacingAndGlyphs" font-family="Liberation Sans,sans-serif" font-size="10.3" fill="#000" stroke="#000" stroke-width="0.16">-237</text>
<text x="166.25" y="468.4" textLength="82.25" lengthAdjust="spacingAndGlyphs" font-family="Liberation Sans,sans-serif" font-size="10.3" fill="#000" stroke="#000" stroke-width="0.16">2026.04.23 21:10:00</text>
<text x="299.75" y="468.4" textLength="16.75" lengthAdjust="spacingAndGlyphs" font-family="Liberation Sans,sans-serif" font-size="10.3" fill="#000" stroke="#000" stroke-width="0.16">buy</text>
<text x="351.75" y="468.4" textLength="18.25" lengthAdjust="spacingAndGlyphs" font-family="Liberation Sans,sans-serif" font-size="10.3" fill="#000" stroke="#000" stroke-width="0.16">0.04</text>
<text x="405.50" y="468.4" textLength="32.25" lengthAdjust="spacingAndGlyphs" font-family="Liberation Sans,sans-serif" font-size="10.3" fill="#000" stroke="#000" stroke-width="0.16">audcad</text>
<text x="481.75" y="468.4" textLength="32.75" lengthAdjust="spacingAndGlyphs" font-family="Liberation Sans,sans-serif" font-size="10.3" fill="#000" stroke="#000" stroke-width="0.16">0.97831</text>
<text x="558.75" y="468.4" textLength="32.75" lengthAdjust="spacingAndGlyphs" font-family="Liberation Sans,sans-serif" font-size="10.3" fill="#000" stroke="#000" stroke-width="0.16">0.00000</text>
<text x="635.50" y="468.4" textLength="32.75" lengthAdjust="spacingAndGlyphs" font-family="Liberation Sans,sans-serif" font-size="10.3" fill="#000" stroke="#000" stroke-width="0.16">0.00000</text>
<text x="711.75" y="468.4" textLength="32.75" lengthAdjust="spacingAndGlyphs" font-family="Liberation Sans,sans-serif" font-size="10.3" fill="#000" stroke="#000" stroke-width="0.16">0.97578</text>
<text x="815.75" y="468.4" textLength="6.00" lengthAdjust="spacingAndGlyphs" font-family="Liberation Sans,sans-serif" font-size="10.3" fill="#000" stroke="#000" stroke-width="0.16">0</text>
<text x="892.00" y="468.4" textLength="6.00" lengthAdjust="spacingAndGlyphs" font-family="Liberation Sans,sans-serif" font-size="10.3" fill="#000" stroke="#000" stroke-width="0.16">0</text>
<text x="974.50" y="468.4" textLength="26.50" lengthAdjust="spacingAndGlyphs" font-family="Liberation Sans,sans-serif" font-size="10.3" fill="#000" stroke="#000" stroke-width="0.16">-1 180</text>
<text x="1007.60" y="452.2" textLength="7.05" lengthAdjust="spacingAndGlyphs" font-family="Liberation Sans,sans-serif" font-size="10.5" fill="#8a8a8a" stroke="#8a8a8a" stroke-width="0.16">×</text>
<text x="1007.60" y="468.59999999999997" textLength="7.05" lengthAdjust="spacingAndGlyphs" font-family="Liberation Sans,sans-serif" font-size="10.5" fill="#8a8a8a" stroke="#8a8a8a" stroke-width="0.16">×</text>
<text x="32.10" y="484.9" textLength="22.90" lengthAdjust="spacingAndGlyphs" font-family="Liberation Sans,Noto Sans CJK JP,sans-serif" font-size="10.4" fill="#000" font-weight="bold" stroke="#000" stroke-width="0.16">残高:</text>
<text x="56.00" y="484.9" textLength="61.40" lengthAdjust="spacingAndGlyphs" font-family="Liberation Sans,sans-serif" font-size="10.3" fill="#000" font-weight="bold" stroke="#000" stroke-width="0.16">1 309 036 JPY</text>
<text x="123.85" y="484.9" textLength="52.80" lengthAdjust="spacingAndGlyphs" font-family="Liberation Sans,Noto Sans CJK JP,sans-serif" font-size="10.4" fill="#000" font-weight="bold" stroke="#000" stroke-width="0.16">有効証拠金:</text>
<text x="177.60" y="484.9" textLength="40.80" lengthAdjust="spacingAndGlyphs" font-family="Liberation Sans,sans-serif" font-size="10.3" fill="#000" font-weight="bold" stroke="#000" stroke-width="0.16">1 307 619</text>
<text x="224.10" y="484.9" textLength="52.80" lengthAdjust="spacingAndGlyphs" font-family="Liberation Sans,Noto Sans CJK JP,sans-serif" font-size="10.4" fill="#000" font-weight="bold" stroke="#000" stroke-width="0.16">余剰証拠金:</text>
<text x="278.00" y="484.9" textLength="40.90" lengthAdjust="spacingAndGlyphs" font-family="Liberation Sans,sans-serif" font-size="10.3" fill="#000" font-weight="bold" stroke="#000" stroke-width="0.16">1 307 619</text>
<text x="974.60" y="484.9" textLength="26.30" lengthAdjust="spacingAndGlyphs" font-family="Liberation Sans,sans-serif" font-size="10.3" fill="#000" font-weight="bold" stroke="#000" stroke-width="0.16">-1 417</text>
<text x="24.10" y="616.8" textLength="19.30" lengthAdjust="spacingAndGlyphs" font-family="Noto Sans CJK JP,sans-serif" font-size="10.4" fill="#000" stroke="#000" stroke-width="0.16">取引</text>
<text x="60.35" y="616.8" textLength="38.80" lengthAdjust="spacingAndGlyphs" font-family="Noto Sans CJK JP,sans-serif" font-size="10.4" fill="#6e6e6e" stroke="#6e6e6e" stroke-width="0.16">運用比率</text>
<text x="116.60" y="616.8" textLength="38.80" lengthAdjust="spacingAndGlyphs" font-family="Noto Sans CJK JP,sans-serif" font-size="10.4" fill="#6e6e6e" stroke="#6e6e6e" stroke-width="0.16">口座履歴</text>
<text x="172.10" y="616.8" textLength="28.30" lengthAdjust="spacingAndGlyphs" font-family="Noto Sans CJK JP,sans-serif" font-size="10.4" fill="#6e6e6e" stroke="#6e6e6e" stroke-width="0.16">ニュース</text>
<text x="216.60" y="616.8" textLength="28.30" lengthAdjust="spacingAndGlyphs" font-family="Noto Sans CJK JP,sans-serif" font-size="10.4" fill="#6e6e6e" stroke="#6e6e6e" stroke-width="0.16">アラーム</text>
<text x="244.80" y="616.8" textLength="19.35" lengthAdjust="spacingAndGlyphs" font-family="Noto Sans CJK JP,sans-serif" font-size="10.4" fill="#6e6e6e" stroke="#6e6e6e" stroke-width="0.16">設定</text>
<text x="280.35" y="616.8" textLength="51.30" lengthAdjust="spacingAndGlyphs" font-family="Noto Sans CJK JP,sans-serif" font-size="10.4" fill="#6e6e6e" stroke="#6e6e6e" stroke-width="0.16">メールボックス</text>
<text x="333.05" y="619.2" textLength="4.65" lengthAdjust="spacingAndGlyphs" font-family="Liberation Sans,sans-serif" font-size="7" fill="#e81010" font-weight="bold" stroke="#e81010" stroke-width="0.16">6</text>
<text x="353.35" y="616.8" textLength="34.55" lengthAdjust="spacingAndGlyphs" font-family="Noto Sans CJK JP,sans-serif" font-size="10.4" fill="#6e6e6e" stroke="#6e6e6e" stroke-width="0.16">マーケット</text>
<text x="389.80" y="619.2" textLength="11.65" lengthAdjust="spacingAndGlyphs" font-family="Liberation Sans,sans-serif" font-size="7" fill="#e81010" font-weight="bold" stroke="#e81010" stroke-width="0.16">105</text>
<text x="418.85" y="616.8" textLength="18.55" lengthAdjust="spacingAndGlyphs" font-family="Noto Sans CJK JP,sans-serif" font-size="10.4" fill="#6e6e6e" stroke="#6e6e6e" stroke-width="0.16">記事</text>
<text x="453.85" y="616.8" textLength="34.80" lengthAdjust="spacingAndGlyphs" font-family="Noto Sans CJK JP,sans-serif" font-size="10.4" fill="#6e6e6e" stroke="#6e6e6e" stroke-width="0.16">ライブラリ</text>
<text x="505.35" y="616.8" textLength="43.80" lengthAdjust="spacingAndGlyphs" font-family="Noto Sans CJK JP,sans-serif" font-size="10.4" fill="#6e6e6e" stroke="#6e6e6e" stroke-width="0.16">エキスパート</text>
<text x="565.85" y="616.8" textLength="39.05" lengthAdjust="spacingAndGlyphs" font-family="Noto Sans CJK JP,sans-serif" font-size="10.4" fill="#6e6e6e" stroke="#6e6e6e" stroke-width="0.16">操作履歴</text>
<text x="2.10" y="640.4" textLength="10.70" lengthAdjust="spacingAndGlyphs" font-family="Liberation Sans,sans-serif" font-size="10.3" fill="#000" stroke="#000" stroke-width="0.16">F1</text>
<text x="12.80" y="640.4" textLength="54.00" lengthAdjust="spacingAndGlyphs" font-family="Noto Sans CJK JP,sans-serif" font-size="10.4" fill="#000" stroke="#000" stroke-width="0.16">キーでヘルプが</text>
<text x="66.80" y="640.4" textLength="18.60" lengthAdjust="spacingAndGlyphs" font-family="Noto Sans CJK JP,sans-serif" font-size="10.4" fill="#000" stroke="#000" stroke-width="0.16">表示</text>
<text x="85.50" y="640.4" textLength="31.90" lengthAdjust="spacingAndGlyphs" font-family="Noto Sans CJK JP,sans-serif" font-size="10.4" fill="#000" stroke="#000" stroke-width="0.16">されます</text>
<text x="443.60" y="640.4" textLength="32.00" lengthAdjust="spacingAndGlyphs" font-family="Liberation Sans,sans-serif" font-size="10.3" fill="#000" stroke="#000" stroke-width="0.16">Default</text>
<text x="928.10" y="640.4" textLength="61.80" lengthAdjust="spacingAndGlyphs" font-family="Liberation Sans,sans-serif" font-size="10.3" fill="#000" stroke="#000" stroke-width="0.16">396095/304 kb</text>
<text transform="translate(10.6 621.6) rotate(-90)" x="0" y="0" textLength="36.6" lengthAdjust="spacingAndGlyphs" font-family="Noto Sans CJK JP,sans-serif" font-size="10" font-weight="500" fill="#101010">ターミナル</text>
</svg>
<div id="win"></div>
</body></html>
